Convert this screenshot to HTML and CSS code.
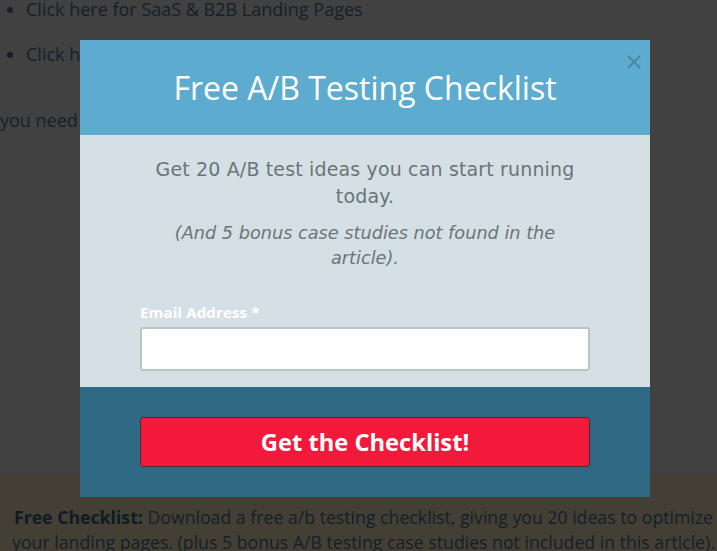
FILE: index.html
```html
<!DOCTYPE html>
<html lang="en">
<head>
  <title>Free A/B Testing Checklist</title>
  <link rel="stylesheet" href="styles.css">
</head>

<body>

<div id="page">
  <ul class="links">
    <li>Click here for SaaS &amp; B2B Landing Pages</li>
    <li>Click here for eCommerce Landing Pages</li>
  </ul>
  <p class="intro">you need a few ideas to get started, here are some of our favourites.</p>
  <div class="spacer"></div>
  <div class="promo">
    <p><strong>Free Checklist:</strong> Download a free a/b testing checklist, giving you 20 ideas to optimize your landing pages. (plus 5 bonus A/B testing case studies not included in this article).</p>
  </div>
</div>

<div id="modal">
  <div class="modal-head">
    <h1>Free A/B Testing Checklist</h1>
    <svg class="close" width="14" height="14" viewBox="0 0 14 14">
      <path d="M1 1 L13 13 M13 1 L1 13" stroke="#4a88a7" stroke-width="2" fill="none"/>
    </svg>
  </div>
  <div class="modal-body">
    <p class="lead">Get 20 A/B test ideas you can start running today.</p>
    <p class="bonus">(And 5 bonus case studies not found in the article).</p>
    <form>
      <label for="email">Email Address *</label>
      <input type="email" id="email">
    </form>
  </div>
  <div class="modal-foot">
    <input type="button" class="submit" value="Get the Checklist!">
  </div>
</div>

</body>
</html>
```

FILE: styles.css
```css
* {
  box-sizing: border-box;
}

body {
  margin: 0;
  padding: 0;
  font-family: "Open Sans", sans-serif;
  background-color: #414141;
  overflow: hidden;
}

#page {
  height: 100vh;
  overflow: hidden;
  color: #14202a;
  font-size: 18px;
  line-height: 26px;
}
.links {
  margin: -4px 0 0;
  padding: 0 0 0 26px;
}
.links li {
  margin-bottom: 19px;
  white-space: nowrap;
}
.intro {
  margin: 40px 0 0;
  white-space: nowrap;
}
.spacer {
  height: 341px;
}
.promo {
  background-color: #433f34;
  padding: 31px 0 20px 10px;
  text-align: center;
  font-size: 17.7px;
  line-height: 25px;
}
.promo p {
  margin: 0;
}
.promo strong {
  color: #0f1b26;
}

#modal {
  position: absolute;
  left: 80px;
  top: 40px;
  width: 570px;
}
.modal-head {
  position: relative;
  height: 95px;
  background-color: #5dacd0;
  display: flex;
  align-items: center;
  justify-content: center;
}
.modal-head h1 {
  margin: 0;
  color: #fff;
  font-weight: normal;
  font-size: 32px;
}
.close {
  position: absolute;
  top: 15px;
  right: 9px;
}
.modal-body {
  background-color: #d5e0e5;
  padding: 21px 60px 16px;
  text-align: center;
  font-family: "DejaVu Sans", sans-serif;
  color: #6b7478;
  font-size: 19px;
  letter-spacing: 0.15px;
  line-height: 27px;
}
.modal-body p {
  margin: 0;
}
.bonus {
  font-style: italic;
  font-size: 17.7px;
  letter-spacing: 0;
  margin-top: 11px !important;
  padding: 0 20px;
  line-height: 25px;
}
form {
  margin-top: 32px;
  text-align: left;
}
label {
  display: block;
  font-family: "Open Sans", sans-serif;
  font-weight: bold;
  font-size: 15px;
  color: #fff;
  line-height: 18px;
  margin-bottom: 6px;
}
input[type=email] {
  display: block;
  width: 100%;
  height: 44px;
  border: 2px solid #b9c4c9;
  border-radius: 3px;
  background: #fff;
}
.modal-foot {
  background-color: #2f6984;
  height: 110px;
  padding: 30px 60px 0;
}
.submit {
  display: block;
  width: 100%;
  height: 50px;
  background-color: #f3193b;
  border: 1px solid #4c2a30;
  border-radius: 3px;
  color: #fff;
  font-family: "Open Sans", sans-serif;
  font-weight: bold;
  font-size: 23.7px;
}
```
